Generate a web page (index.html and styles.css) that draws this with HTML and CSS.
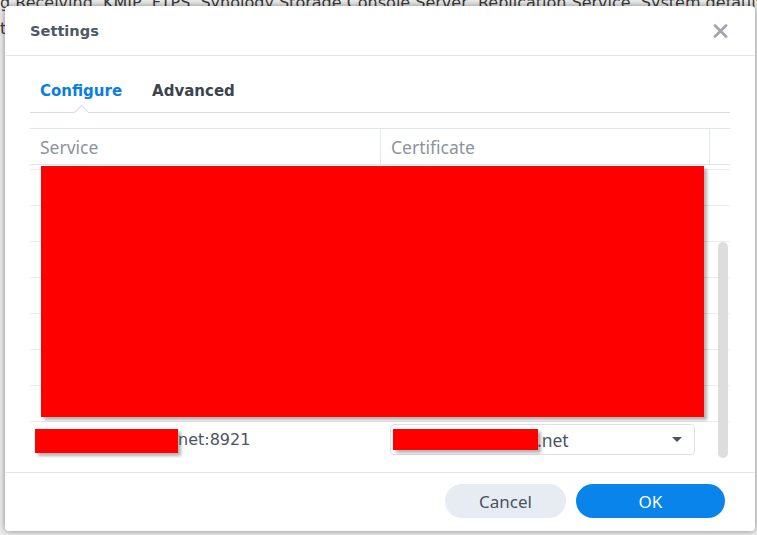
FILE: index.html
```html
<!DOCTYPE html>
<html lang="en">
<head>
    <meta charset="UTF-8">
    <meta name="viewport" content="width=device-width, initial-scale=1.0">
    <title>Settings</title>
    <link rel="stylesheet" href="styles.css">
</head>
<body>
    <div class="desktop">
        <p class="desktop-text">g Receiving, KMIP, FTPS, Synology Storage Console Server, Replication Service, System default</p>
        <p class="desktop-text">t</p>
    </div>

    <div class="dialog">
        <div class="dialog-header">
            <span class="dialog-title">Settings</span>
            <span class="close-btn">
                <svg width="15" height="14" viewBox="0 0 15 14">
                    <path d="M2 1.5 L13 12.5 M13 1.5 L2 12.5" stroke="#a3a7ad" stroke-width="2.8" stroke-linecap="round"/>
                </svg>
            </span>
        </div>

        <div class="dialog-body">
            <ul class="tabs">
                <li class="tab active">Configure</li>
                <li class="tab">Advanced</li>
            </ul>

            <div class="grid">
                <div class="grid-head">
                    <div class="cell col-service">Service</div>
                    <div class="cell col-cert">Certificate</div>
                    <div class="cell col-spare"></div>
                </div>
                <div class="grid-body">
                    <div class="row partial"></div>
                    <div class="row"></div>
                    <div class="row"></div>
                    <div class="row"></div>
                    <div class="row"></div>
                    <div class="row"></div>
                    <div class="row"></div>
                    <div class="row"></div>
                    <div class="row last">
                        <div class="cell col-service value"><span class="redact redact-host"></span>net:8921</div>
                        <div class="cell col-cert">
                            <div class="select">
                                <span class="select-text"><span class="redact redact-cert"></span>.net</span>
                                <span class="select-arrow"></span>
                            </div>
                        </div>
                    </div>
                </div>
                <div class="scrollbar"></div>
                <div class="redact-block"></div>
            </div>
        </div>

        <div class="dialog-footer">
            <button class="btn btn-cancel">Cancel</button>
            <button class="btn btn-ok">OK</button>
        </div>
    </div>
</body>
</html>
```

FILE: styles.css
```css
body, html {
    margin: 0;
    padding: 0;
    width: 757px;
    height: 535px;
    overflow: hidden;
    background-color: #eeeeee;
    font-family: "Noto Sans", sans-serif;
}

.desktop {
    margin-top: -10px;
}

.desktop-text {
    margin: 0;
    font-family: "DejaVu Sans", sans-serif;
    font-size: 16px;
    line-height: 26px;
    color: #3a3a3a;
    white-space: nowrap;
}

.dialog {
    position: absolute;
    left: 5px;
    top: 6px;
    width: 750px;
    height: 525px;
    background: #fff;
    border-radius: 4px;
    box-shadow: 0 0 7px rgba(0, 0, 0, 0.45);
    display: flex;
    flex-direction: column;
}

.dialog-header {
    height: 49px;
    border-bottom: 1px solid #e3e7ec;
    display: flex;
    align-items: center;
    justify-content: space-between;
    padding: 0 27px 0 25px;
}

.dialog-title {
    font-family: "DejaVu Sans", sans-serif;
    font-weight: bold;
    font-size: 14.6px;
    color: #4e5866;
}

.close-btn {
    display: flex;
}

.dialog-body {
    flex: 1;
    padding: 0 25px;
}

.tabs {
    list-style: none;
    margin: 0;
    padding: 24px 0 0;
    display: flex;
    gap: 30px;
    border-bottom: 1px solid #d6dee7;
}

.tab {
    position: relative;
    font-family: "DejaVu Sans", sans-serif;
    font-weight: bold;
    font-size: 15px;
    line-height: 22px;
    padding: 0 0 10px;
    color: #3c4450;
}

.tabs .tab:first-child {
    margin-left: 10px;
}

.tab.active {
    color: #0a7fe0;
}

.tab.active::after {
    content: "";
    position: absolute;
    left: 50%;
    bottom: -6px;
    width: 10px;
    height: 10px;
    margin-left: -5px;
    background: #fff;
    border-top: 1px solid #d6dee7;
    border-left: 1px solid #d6dee7;
    transform: rotate(45deg);
}

.grid {
    position: relative;
    margin-top: 15px;
    border-top: 1px solid #dfe5ec;
}

.grid-head {
    display: flex;
    height: 35px;
    border-bottom: 1px solid #dfe5ec;
}

.cell {
    display: flex;
    align-items: center;
    padding-left: 10px;
    box-sizing: border-box;
}

.grid-head .cell {
    font-size: 17.5px;
    color: #8d949c;
}

.col-service {
    width: 350px;
}

.col-cert {
    width: 329px;
    border-left: 1px solid #e6eaef;
}

.col-spare {
    flex: 1;
    border-left: 1px solid #e6eaef;
}

.grid-body {
    height: 293px;
    overflow: hidden;
}

.row {
    height: 35px;
    border-bottom: 1px solid #e8ebef;
    display: flex;
}

.row.partial {
    height: 4px;
}

.row.last {
    border-bottom: none;
}

.row.last .col-cert {
    border-left: none;
}

.value {
    font-family: "DejaVu Sans", sans-serif;
    font-size: 16px;
    color: #4c5462;
}

.redact {
    display: inline-block;
    background: #ff0000;
    box-shadow: 3px 3px 3px rgba(0, 0, 0, 0.3);
}

.redact-host {
    width: 143px;
    height: 24px;
    margin-left: -5px;
    margin-top: 2px;
}

.redact-cert {
    width: 145px;
    height: 21px;
    margin-right: -1px;
}

.select {
    width: 305px;
    height: 31px;
    box-sizing: border-box;
    border: 1px solid #dae1ea;
    border-radius: 4px;
    display: flex;
    align-items: center;
    justify-content: space-between;
    padding: 0 12px 0 2px;
}

.select-text {
    display: flex;
    align-items: center;
    font-size: 17.5px;
    color: #4c5462;
}

.select-arrow {
    width: 0;
    height: 0;
    border-left: 5px solid transparent;
    border-right: 5px solid transparent;
    border-top: 5px solid #4c5462;
}

.scrollbar {
    position: absolute;
    right: 2px;
    top: 113px;
    width: 10px;
    height: 216px;
    border-radius: 5px;
    background: #dddddd;
}

.redact-block {
    position: absolute;
    left: 11px;
    top: 37px;
    width: 663px;
    height: 251px;
    background: #ff0000;
    box-shadow: 3px 3px 3px rgba(0, 0, 0, 0.3);
}

.dialog-footer {
    border-top: 1px solid #e3e7ec;
    display: flex;
    justify-content: flex-end;
    gap: 10px;
    padding: 11px 30px 13px;
}

.btn {
    height: 34px;
    border: none;
    border-radius: 17px;
    font-family: "Noto Sans", sans-serif;
    font-size: 17px;
    cursor: pointer;
}

.btn-cancel {
    width: 121px;
    background: #e7ecf3;
    color: #4a5260;
}

.btn-ok {
    width: 149px;
    background: #0984ea;
    color: #fff;
}
```
